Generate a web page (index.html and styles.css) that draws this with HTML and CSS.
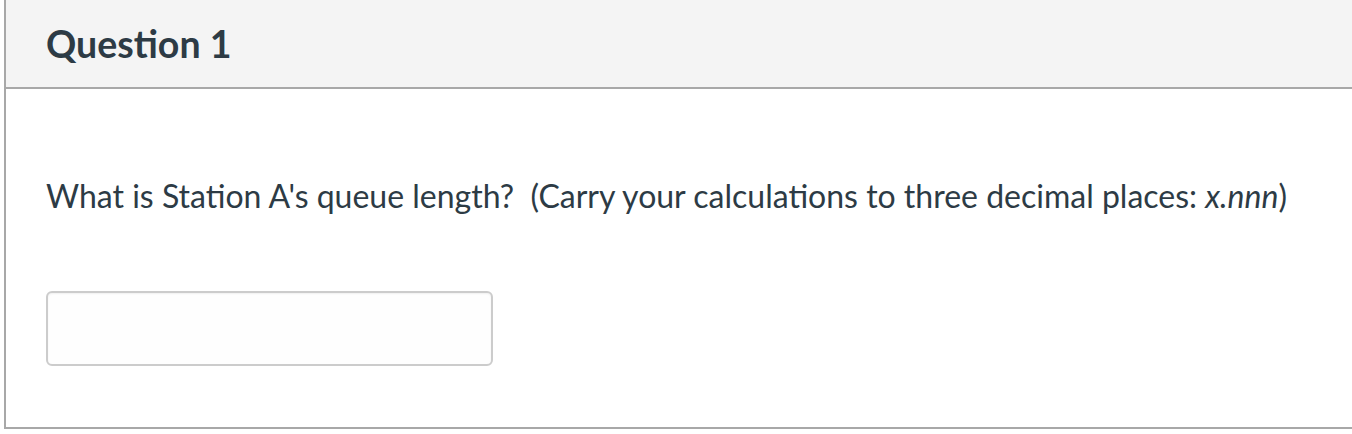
FILE: index.html
```html
<!DOCTYPE html>
<html>
<head>
<meta charset="utf-8">
<link rel="stylesheet" href="styles.css">
</head>
<body>
<div class="question">
  <div class="question-header">
    <h2 class="question-title">Question 1</h2>
  </div>
  <div class="question-body">
    <p class="question-text">What is Station A's queue length?&nbsp; (Carry your calculations to three decimal places: <em>x.nnn</em>)</p>
    <input class="answer-input" type="text">
  </div>
</div>
</body>
</html>
```
FILE: styles.css
```css
html, body {
  margin: 0;
  padding: 0;
  background: #ffffff;
}
body {
  font-family: Lato, "Noto Sans", sans-serif;
  color: #2d3b45;
}
.question {
  margin-left: 4px;
  margin-right: -20px;
  border-left: 2px solid #a8a8a8;
  border-bottom: 2px solid #a8a8a8;
  border-right: 2px solid #a8a8a8;
}
.question-header {
  background: #f4f4f4;
  border-bottom: 2px solid #a8a8a8;
  height: 87px;
  padding-left: 40px;
  display: flex;
  align-items: center;
}
.question-title {
  margin: 0;
  font-size: 37.5px;
  font-weight: 700;
  color: #2d3b45;
}
.question-body {
  padding: 0 40px;
  height: 338px;
  display: flex;
  flex-direction: column;
}
.question-text {
  margin: 88px 0 0 0;
  font-size: 32px;
  line-height: 38px;
  white-space: nowrap;
}
.answer-input {
  margin-top: 76px;
  width: 447px;
  height: 75px;
  box-sizing: border-box;
  border: 2px solid #cccccc;
  border-radius: 6px;
  background: #fefefe;
  box-shadow: inset 0 1px 2px rgba(0,0,0,0.06);
  outline: none;
  padding: 0;
}
```
